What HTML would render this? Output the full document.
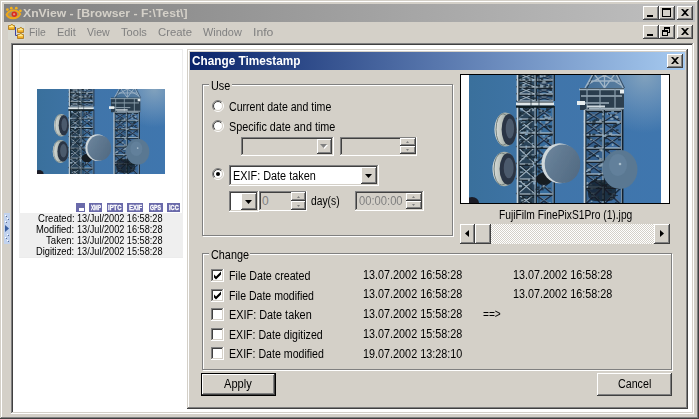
<!DOCTYPE html><html><head><meta charset="utf-8"><title>XnView - Change Timestamp</title><style>
*{box-sizing:border-box;margin:0;padding:0}
html,body{width:699px;height:419px;overflow:hidden;background:#d4d0c8}
body{position:relative;font-family:"Liberation Sans",sans-serif;font-size:11px;color:#000;line-height:13px}
.a{position:absolute}
.t{position:absolute;white-space:nowrap}
.win{box-shadow:inset -1px -1px #404040,inset 1px 1px #d4d0c8,inset -2px -2px #808080,inset 2px 2px #fff;background:#d4d0c8}
.btn{box-shadow:inset -1px -1px #404040,inset 1px 1px #fff,inset -2px -2px #808080,inset 2px 2px #d4d0c8;background:#d4d0c8}
.sunk{box-shadow:inset -1px -1px #fff,inset 1px 1px #808080,inset -2px -2px #d4d0c8,inset 2px 2px #404040;background:#fff}
.grp{border:1px solid #808080;box-shadow:1px 1px 0 #fff,inset 1px 1px 0 #fff}
.rad{border-radius:50%;background:#fff;box-shadow:inset 1px 1px 0 #808080,inset -1px -1px 0 #fff,inset 2px 2px 0 #404040,inset -2px -2px 0 #d4d0c8}
.chk{background:repeating-conic-gradient(#fff 0 25%,#d4d0c8 0 50%) 0 0/2px 2px}
svg{position:absolute;overflow:visible}
</style></head><body>
<svg width="0" height="0" style="left:0;top:0"><defs><linearGradient id="fg" x1="0" y1="0" x2="0" y2="1"><stop offset="0" stop-color="#fde98a"/><stop offset=".5" stop-color="#f9c93c"/><stop offset="1" stop-color="#ee9a14"/></linearGradient><linearGradient id="ro" x1="0" y1="0" x2="1" y2="1"><stop offset=".5" stop-color="#808080"/><stop offset=".5" stop-color="#fff"/></linearGradient><linearGradient id="ri" x1="0" y1="0" x2="1" y2="1"><stop offset=".5" stop-color="#404040"/><stop offset=".5" stop-color="#d4d0c8"/></linearGradient></defs><symbol id="ph" viewBox="0 0 192 128" preserveAspectRatio="none"><defs><linearGradient id="sky" x1="0" y1="0" x2="1" y2="0"><stop offset="0" stop-color="#3a709c"/><stop offset=".45" stop-color="#4075aa"/><stop offset="1" stop-color="#3f76ae"/></linearGradient><radialGradient id="hz" cx="176" cy="0" r="58" gradientUnits="userSpaceOnUse"><stop offset="0" stop-color="#8eaac0" stop-opacity=".85"/><stop offset=".5" stop-color="#88a6c2" stop-opacity=".45"/><stop offset="1" stop-color="#88a6c2" stop-opacity="0"/></radialGradient><linearGradient id="dish" x1="0" y1="0" x2="1" y2=".6"><stop offset="0" stop-color="#6f879e"/><stop offset=".5" stop-color="#5f7890"/><stop offset="1" stop-color="#546c84"/></linearGradient><linearGradient id="rim" x1="0" y1="0" x2="1" y2="0"><stop offset="0" stop-color="#dde1de"/><stop offset=".45" stop-color="#adb6b0"/><stop offset="1" stop-color="#7f8b89"/></linearGradient><filter id="bl" x="-5%" y="-5%" width="110%" height="110%"><feGaussianBlur stdDeviation=".5"/></filter></defs><rect width="192" height="128" fill="url(#sky)"/><rect width="192" height="128" fill="url(#hz)"/><g filter="url(#bl)"><ellipse cx="3" cy="128" rx="7" ry="6" fill="#1a1c28"/><rect x="48.5" y="-2" width="17.5" height="28" fill="#22323e" opacity="0.7"/><rect x="66" y="-2" width="18" height="28" fill="#22323e" opacity="0.35"/><path d="M49.8 -2L67.3 5M64.7 -2L47.2 5M49.8 5L67.3 12M64.7 5L47.2 12M49.8 12L67.3 19M64.7 12L47.2 19M49.8 19L67.3 26M64.7 19L47.2 26" stroke="#16242e" stroke-width="1.6" fill="none"/><path d="M48.5 -2L66 5M66 -2L48.5 5M48.5 5L66 12M66 5L48.5 12M48.5 12L66 19M66 12L48.5 19M48.5 19L66 26M66 19L48.5 26" stroke="#98acbc" stroke-width="1.1" fill="none"/><path d="M66 -2L84 5M84 -2L66 5M66 5L84 12M84 5L66 12M66 12L84 19M84 12L66 19M66 19L84 26M84 19L66 26" stroke="#1a2e48" stroke-width="2" fill="none"/><path d="M67.2 -2L85.2 5M82.8 -2L64.8 5M67.2 5L85.2 12M82.8 5L64.8 12M67.2 12L85.2 19M82.8 12L64.8 19M67.2 19L85.2 26M82.8 19L64.8 26" stroke="#98acbc" stroke-width=".7" fill="none" opacity=".75"/><path d="M48.5 -0.8H84M48.5 6.2H84M48.5 13.2H84M48.5 20.2H84M48.5 27.2H84" stroke="#16242e" stroke-width="1.8" fill="none"/><path d="M48.5 -2H84M48.5 5H84M48.5 12H84M48.5 19H84M48.5 26H84" stroke="#c6d2da" stroke-width="1" fill="none"/><path d="M49.7 -2V26" stroke="#16242e" stroke-width="1.500"/><path d="M48.5 -2V26" stroke="#c6d2da" stroke-width="1.7"/><path d="M67.2 -2V26" stroke="#16242e" stroke-width="1.500"/><path d="M66 -2V26" stroke="#93a5b3" stroke-width="1.2"/><path d="M85.2 -2V26" stroke="#16242e" stroke-width="1.500"/><path d="M84 -2V26" stroke="#7f93a4" stroke-width="0.9"/><rect x="59.7" y="1.9" width="1.6" height="2.2" fill="#98acbc" opacity=".8"/><rect x="52.5" y="13.2" width="1.9" height="1.1" fill="#8fb0cc" opacity=".8"/><rect x="62.7" y="4.3" width="2.3" height="2.2" fill="#8fb0cc" opacity=".8"/><rect x="53.4" y="3.8" width="2.7" height="1.1" fill="#98acbc" opacity=".8"/><rect x="67.9" y="-0.7" width="1.6" height="2.3" fill="#16242e" opacity=".8"/><rect x="58.6" y="1.8" width="2.6" height="1.8" fill="#16242e" opacity=".8"/><rect x="71.0" y="0.7" width="2.8" height="1.6" fill="#8fb0cc" opacity=".8"/><rect x="66.8" y="-0.4" width="2.7" height="1.7" fill="#16242e" opacity=".8"/><rect x="66.2" y="18.2" width="2.7" height="1.7" fill="#2b4254" opacity=".8"/><rect x="58.9" y="18.7" width="3.1" height="1.1" fill="#98acbc" opacity=".8"/><rect x="59.0" y="10.9" width="3.0" height="1.4" fill="#16242e" opacity=".8"/><rect x="80.4" y="1.1" width="1.8" height="1.5" fill="#2b4254" opacity=".8"/><rect x="78.9" y="9.0" width="1.7" height="1.8" fill="#98acbc" opacity=".8"/><rect x="74.4" y="19.3" width="2.9" height="1.9" fill="#16242e" opacity=".8"/><rect x="67.8" y="9.9" width="3.4" height="1.7" fill="#16242e" opacity=".8"/><rect x="70.4" y="-0.4" width="2.1" height="1.9" fill="#98acbc" opacity=".8"/><rect x="71.0" y="9.6" width="2.3" height="2.0" fill="#98acbc" opacity=".8"/><rect x="50.2" y="10.0" width="2.7" height="1.7" fill="#16242e" opacity=".8"/><rect x="56.4" y="5.5" width="2.0" height="1.6" fill="#98acbc" opacity=".8"/><rect x="76.9" y="0.1" width="2.3" height="1.4" fill="#2b4254" opacity=".8"/><rect x="53.8" y="9.2" width="2.1" height="1.6" fill="#8fb0cc" opacity=".8"/><rect x="60.8" y="21.0" width="1.8" height="1.3" fill="#16242e" opacity=".8"/><rect x="56.8" y="4.1" width="3.2" height="1.3" fill="#2b4254" opacity=".8"/><rect x="58.4" y="1.8" width="2.2" height="1.8" fill="#8fb0cc" opacity=".8"/><rect x="79.5" y="16.0" width="3.4" height="2.0" fill="#8fb0cc" opacity=".8"/><rect x="72.8" y="9.9" width="3.1" height="1.6" fill="#98acbc" opacity=".8"/><rect x="62.1" y="0.7" width="2.3" height="1.3" fill="#98acbc" opacity=".8"/><rect x="80.5" y="9.5" width="2.2" height="1.1" fill="#16242e" opacity=".8"/><rect x="49.5" y="1.9" width="3.4" height="1.9" fill="#16242e" opacity=".8"/><rect x="51.7" y="3.4" width="1.8" height="1.4" fill="#2b4254" opacity=".8"/><rect x="60.4" y="7.5" width="1.7" height="1.7" fill="#16242e" opacity=".8"/><rect x="80.3" y="10.5" width="1.7" height="1.2" fill="#16242e" opacity=".8"/><rect x="60.3" y="4.9" width="1.8" height="1.0" fill="#98acbc" opacity=".8"/><rect x="79.5" y="11.7" width="2.9" height="2.4" fill="#16242e" opacity=".8"/><rect x="73.4" y="5.8" width="3.2" height="2.0" fill="#98acbc" opacity=".8"/><rect x="57.7" y="7.5" width="2.2" height="1.3" fill="#16242e" opacity=".8"/><rect x="66.6" y="11.1" width="1.9" height="2.2" fill="#98acbc" opacity=".8"/><rect x="80.5" y="20.2" width="3.1" height="2.1" fill="#16242e" opacity=".8"/><rect x="56.6" y="11.5" width="3.0" height="2.5" fill="#16242e" opacity=".8"/><rect x="74.4" y="10.3" width="2.9" height="2.4" fill="#16242e" opacity=".8"/><rect x="63.6" y="22.4" width="3.4" height="1.5" fill="#16242e" opacity=".8"/><rect x="56.4" y="3.9" width="2.2" height="1.7" fill="#16242e" opacity=".8"/><rect x="80.5" y="13.9" width="2.5" height="2.0" fill="#16242e" opacity=".8"/><rect x="74.7" y="0.2" width="1.7" height="1.6" fill="#98acbc" opacity=".8"/><rect x="71.9" y="3.2" width="2.4" height="2.0" fill="#16242e" opacity=".8"/><rect x="48.5" y="31" width="17.5" height="101" fill="#22323e" opacity="0.75"/><rect x="66" y="31" width="18" height="101" fill="#22323e" opacity="0.12"/><path d="M49.8 31L67.3 44M64.7 31L47.2 44M49.8 44L67.3 58M64.7 44L47.2 58M49.8 58L67.3 72M64.7 58L47.2 72M49.8 72L67.3 89M64.7 72L47.2 89M49.8 89L67.3 104M64.7 89L47.2 104M49.8 104L67.3 119M64.7 104L47.2 119M49.8 119L67.3 132M64.7 119L47.2 132" stroke="#16242e" stroke-width="1.6" fill="none"/><path d="M48.5 31L66 44M66 31L48.5 44M48.5 44L66 58M66 44L48.5 58M48.5 58L66 72M66 58L48.5 72M48.5 72L66 89M66 72L48.5 89M48.5 89L66 104M66 89L48.5 104M48.5 104L66 119M66 104L48.5 119M48.5 119L66 132M66 119L48.5 132" stroke="#98acbc" stroke-width="1.1" fill="none"/><path d="M66 31L84 44M84 31L66 44M66 44L84 58M84 44L66 58M66 58L84 72M84 58L66 72M66 72L84 89M84 72L66 89M66 89L84 104M84 89L66 104M66 104L84 119M84 104L66 119M66 119L84 132M84 119L66 132" stroke="#1a2e48" stroke-width="2" fill="none"/><path d="M67.2 31L85.2 44M82.8 31L64.8 44M67.2 44L85.2 58M82.8 44L64.8 58M67.2 58L85.2 72M82.8 58L64.8 72M67.2 72L85.2 89M82.8 72L64.8 89M67.2 89L85.2 104M82.8 89L64.8 104M67.2 104L85.2 119M82.8 104L64.8 119M67.2 119L85.2 132M82.8 119L64.8 132" stroke="#98acbc" stroke-width=".7" fill="none" opacity=".75"/><path d="M48.5 32.2H84M48.5 45.2H84M48.5 59.2H84M48.5 73.2H84M48.5 90.2H84M48.5 105.2H84M48.5 120.2H84M48.5 133.2H84" stroke="#16242e" stroke-width="1.8" fill="none"/><path d="M48.5 31H84M48.5 44H84M48.5 58H84M48.5 72H84M48.5 89H84M48.5 104H84M48.5 119H84M48.5 132H84" stroke="#c6d2da" stroke-width="1" fill="none"/><path d="M49.7 31V132" stroke="#16242e" stroke-width="1.500"/><path d="M48.5 31V132" stroke="#c6d2da" stroke-width="1.7"/><path d="M67.2 31V132" stroke="#16242e" stroke-width="1.500"/><path d="M66 31V132" stroke="#93a5b3" stroke-width="1.2"/><path d="M85.2 31V132" stroke="#16242e" stroke-width="1.500"/><path d="M84 31V132" stroke="#7f93a4" stroke-width="0.9"/><rect x="52.2" y="124.7" width="2.3" height="1.6" fill="#98acbc" opacity=".8"/><rect x="79.3" y="102.8" width="3.5" height="1.0" fill="#16242e" opacity=".8"/><rect x="68.1" y="77.1" width="1.8" height="2.2" fill="#98acbc" opacity=".8"/><rect x="80.4" y="96.1" width="1.8" height="1.8" fill="#16242e" opacity=".8"/><rect x="50.2" y="110.1" width="2.8" height="1.8" fill="#98acbc" opacity=".8"/><rect x="78.9" y="73.9" width="3.2" height="1.3" fill="#16242e" opacity=".8"/><rect x="57.4" y="60.0" width="3.0" height="1.5" fill="#16242e" opacity=".8"/><rect x="66.6" y="113.6" width="3.3" height="1.5" fill="#16242e" opacity=".8"/><rect x="63.9" y="88.8" width="2.3" height="2.4" fill="#8fb0cc" opacity=".8"/><rect x="65.3" y="83.7" width="2.5" height="2.3" fill="#8fb0cc" opacity=".8"/><rect x="74.0" y="91.2" width="1.8" height="1.7" fill="#16242e" opacity=".8"/><rect x="72.3" y="86.1" width="2.9" height="1.8" fill="#16242e" opacity=".8"/><rect x="64.7" y="107.9" width="1.6" height="1.3" fill="#8fb0cc" opacity=".8"/><rect x="50.8" y="40.7" width="2.6" height="2.1" fill="#2b4254" opacity=".8"/><rect x="78.2" y="74.9" width="3.4" height="1.9" fill="#8fb0cc" opacity=".8"/><rect x="55.8" y="58.4" width="2.6" height="1.7" fill="#8fb0cc" opacity=".8"/><rect x="79.2" y="100.2" width="3.3" height="2.3" fill="#16242e" opacity=".8"/><rect x="55.9" y="75.3" width="1.7" height="1.7" fill="#2b4254" opacity=".8"/><rect x="51.8" y="54.8" width="1.9" height="1.5" fill="#16242e" opacity=".8"/><rect x="53.4" y="107.9" width="2.8" height="1.5" fill="#98acbc" opacity=".8"/><rect x="57.5" y="44.6" width="1.9" height="2.4" fill="#2b4254" opacity=".8"/><rect x="62.0" y="79.2" width="3.2" height="1.2" fill="#98acbc" opacity=".8"/><rect x="63.1" y="82.0" width="2.3" height="1.5" fill="#16242e" opacity=".8"/><rect x="52.4" y="67.2" width="2.6" height="1.7" fill="#16242e" opacity=".8"/><rect x="50.1" y="63.8" width="2.1" height="2.4" fill="#8fb0cc" opacity=".8"/><rect x="53.1" y="121.9" width="3.4" height="1.2" fill="#16242e" opacity=".8"/><rect x="57.9" y="34.9" width="2.0" height="1.2" fill="#16242e" opacity=".8"/><rect x="62.8" y="121.2" width="2.3" height="1.8" fill="#16242e" opacity=".8"/><rect x="65.7" y="80.0" width="1.7" height="1.1" fill="#16242e" opacity=".8"/><rect x="71.2" y="73.1" width="2.0" height="1.0" fill="#16242e" opacity=".8"/><rect x="52.3" y="56.8" width="3.2" height="1.1" fill="#8fb0cc" opacity=".8"/><rect x="76.7" y="75.9" width="3.5" height="1.6" fill="#16242e" opacity=".8"/><rect x="78.3" y="92.5" width="2.6" height="1.4" fill="#16242e" opacity=".8"/><rect x="52.9" y="47.0" width="1.9" height="2.4" fill="#16242e" opacity=".8"/><rect x="69.3" y="83.6" width="2.1" height="1.8" fill="#16242e" opacity=".8"/><rect x="55.1" y="65.4" width="3.5" height="1.1" fill="#16242e" opacity=".8"/><rect x="50.1" y="81.1" width="2.5" height="1.4" fill="#16242e" opacity=".8"/><rect x="63.6" y="96.2" width="2.4" height="1.7" fill="#98acbc" opacity=".8"/><rect x="75.8" y="69.9" width="2.1" height="1.3" fill="#8fb0cc" opacity=".8"/><rect x="56.7" y="50.7" width="3.0" height="1.2" fill="#98acbc" opacity=".8"/><rect x="80.7" y="128.2" width="1.5" height="1.9" fill="#16242e" opacity=".8"/><rect x="77.2" y="73.6" width="1.7" height="2.3" fill="#16242e" opacity=".8"/><rect x="76.9" y="97.4" width="2.7" height="2.0" fill="#16242e" opacity=".8"/><rect x="50.9" y="49.3" width="2.4" height="1.4" fill="#16242e" opacity=".8"/><rect x="79.8" y="127.3" width="2.1" height="1.1" fill="#8fb0cc" opacity=".8"/><rect x="77.3" y="52.6" width="1.5" height="1.6" fill="#16242e" opacity=".8"/><rect x="64.5" y="80.8" width="2.0" height="2.2" fill="#16242e" opacity=".8"/><rect x="52.4" y="111.9" width="2.3" height="1.1" fill="#16242e" opacity=".8"/><rect x="50.2" y="61.1" width="1.7" height="2.4" fill="#16242e" opacity=".8"/><rect x="76.4" y="46.4" width="3.1" height="1.9" fill="#98acbc" opacity=".8"/><rect x="73.6" y="102.3" width="1.8" height="2.1" fill="#2b4254" opacity=".8"/><rect x="69.8" y="35.3" width="3.3" height="1.9" fill="#98acbc" opacity=".8"/><rect x="72.6" y="111.4" width="3.3" height="2.1" fill="#16242e" opacity=".8"/><rect x="67.4" y="111.5" width="3.2" height="1.9" fill="#16242e" opacity=".8"/><rect x="77.6" y="98.6" width="2.8" height="1.1" fill="#98acbc" opacity=".8"/><rect x="50.8" y="94.1" width="2.3" height="1.7" fill="#16242e" opacity=".8"/><rect x="51.1" y="32.9" width="2.9" height="1.7" fill="#8fb0cc" opacity=".8"/><rect x="49.6" y="110.0" width="3.4" height="2.3" fill="#98acbc" opacity=".8"/><rect x="52.4" y="83.1" width="3.0" height="1.4" fill="#98acbc" opacity=".8"/><rect x="51.8" y="57.3" width="3.0" height="1.3" fill="#98acbc" opacity=".8"/><rect x="70.0" y="76.6" width="1.7" height="2.4" fill="#2b4254" opacity=".8"/><rect x="58.6" y="35.6" width="2.8" height="1.1" fill="#98acbc" opacity=".8"/><rect x="54.1" y="56.1" width="2.9" height="1.9" fill="#98acbc" opacity=".8"/><rect x="53.7" y="78.8" width="2.0" height="2.0" fill="#2b4254" opacity=".8"/><rect x="71.3" y="97.9" width="2.9" height="1.4" fill="#16242e" opacity=".8"/><rect x="64.2" y="106.9" width="1.9" height="2.5" fill="#8fb0cc" opacity=".8"/><rect x="79.0" y="32.7" width="1.7" height="1.8" fill="#2b4254" opacity=".8"/><rect x="80.8" y="129.4" width="1.9" height="2.4" fill="#2b4254" opacity=".8"/><rect x="56.1" y="88.6" width="3.0" height="1.4" fill="#16242e" opacity=".8"/><rect x="60.8" y="90.7" width="2.5" height="2.3" fill="#98acbc" opacity=".8"/><rect x="71.7" y="53.9" width="2.3" height="1.2" fill="#2b4254" opacity=".8"/><rect x="79.4" y="98.5" width="2.1" height="1.2" fill="#2b4254" opacity=".8"/><rect x="60.3" y="62.3" width="1.5" height="2.1" fill="#16242e" opacity=".8"/><rect x="75.9" y="42.9" width="2.9" height="2.4" fill="#16242e" opacity=".8"/><rect x="58.6" y="67.8" width="2.3" height="2.3" fill="#2b4254" opacity=".8"/><rect x="51.9" y="122.6" width="3.2" height="1.4" fill="#16242e" opacity=".8"/><rect x="51.1" y="96.5" width="3.4" height="1.4" fill="#98acbc" opacity=".8"/><rect x="57.9" y="81.6" width="3.0" height="2.2" fill="#16242e" opacity=".8"/><rect x="63.0" y="33.9" width="2.3" height="2.3" fill="#98acbc" opacity=".8"/><rect x="67.0" y="51.1" width="1.6" height="2.1" fill="#16242e" opacity=".8"/><rect x="63.7" y="105.5" width="3.2" height="1.7" fill="#98acbc" opacity=".8"/><rect x="78.2" y="85.5" width="2.4" height="1.5" fill="#16242e" opacity=".8"/><rect x="58.9" y="104.2" width="2.0" height="2.0" fill="#98acbc" opacity=".8"/><rect x="59.0" y="86.2" width="1.7" height="2.0" fill="#2b4254" opacity=".8"/><rect x="51.9" y="80.6" width="2.6" height="1.7" fill="#2b4254" opacity=".8"/><rect x="60.0" y="106.2" width="1.8" height="1.3" fill="#2b4254" opacity=".8"/><rect x="52.4" y="64.9" width="2.1" height="1.6" fill="#16242e" opacity=".8"/><rect x="75.0" y="51.0" width="3.0" height="1.6" fill="#16242e" opacity=".8"/><rect x="62.5" y="82.9" width="2.0" height="2.1" fill="#2b4254" opacity=".8"/><rect x="65.2" y="87.9" width="1.8" height="1.8" fill="#16242e" opacity=".8"/><rect x="69.3" y="116.4" width="1.7" height="2.3" fill="#16242e" opacity=".8"/><rect x="61.6" y="94.9" width="3.4" height="2.3" fill="#2b4254" opacity=".8"/><rect x="77.0" y="33.2" width="2.4" height="2.1" fill="#16242e" opacity=".8"/><rect x="74.8" y="126.9" width="1.5" height="1.6" fill="#2b4254" opacity=".8"/><rect x="78.7" y="112.7" width="3.4" height="1.4" fill="#2b4254" opacity=".8"/><rect x="52.9" y="46.3" width="3.4" height="1.2" fill="#8fb0cc" opacity=".8"/><rect x="75.5" y="100.4" width="1.7" height="2.2" fill="#2b4254" opacity=".8"/><rect x="49.5" y="43.4" width="3.3" height="2.0" fill="#8fb0cc" opacity=".8"/><rect x="59.1" y="43.7" width="2.6" height="1.7" fill="#16242e" opacity=".8"/><rect x="73.6" y="40.8" width="2.5" height="1.9" fill="#16242e" opacity=".8"/><rect x="61.7" y="53.1" width="1.5" height="1.8" fill="#8fb0cc" opacity=".8"/><rect x="80.9" y="58.6" width="2.8" height="2.3" fill="#16242e" opacity=".8"/><rect x="64.5" y="54.2" width="1.6" height="1.6" fill="#16242e" opacity=".8"/><rect x="70.0" y="36.5" width="2.5" height="2.0" fill="#16242e" opacity=".8"/><rect x="62.7" y="56.5" width="2.3" height="1.6" fill="#98acbc" opacity=".8"/><rect x="65.0" y="99.9" width="2.3" height="2.0" fill="#98acbc" opacity=".8"/><rect x="55.7" y="109.9" width="3.2" height="1.1" fill="#98acbc" opacity=".8"/><rect x="65.1" y="50.8" width="2.0" height="1.3" fill="#16242e" opacity=".8"/><rect x="73.5" y="60.2" width="2.5" height="1.3" fill="#8fb0cc" opacity=".8"/><rect x="56.5" y="72.3" width="1.6" height="1.9" fill="#98acbc" opacity=".8"/><rect x="78.5" y="36.4" width="3.4" height="1.2" fill="#16242e" opacity=".8"/><rect x="51.1" y="37.0" width="2.4" height="2.1" fill="#2b4254" opacity=".8"/><rect x="59.4" y="42.2" width="3.4" height="1.5" fill="#16242e" opacity=".8"/><rect x="55.3" y="123.7" width="2.4" height="1.5" fill="#98acbc" opacity=".8"/><rect x="72.3" y="114.1" width="2.4" height="1.2" fill="#16242e" opacity=".8"/><rect x="52.0" y="39.0" width="3.4" height="1.2" fill="#2b4254" opacity=".8"/><rect x="79.9" y="51.5" width="3.0" height="1.5" fill="#16242e" opacity=".8"/><rect x="74.8" y="39.7" width="2.4" height="1.6" fill="#98acbc" opacity=".8"/><rect x="78.5" y="50.1" width="3.0" height="1.7" fill="#16242e" opacity=".8"/><rect x="69.4" y="55.6" width="3.0" height="1.1" fill="#98acbc" opacity=".8"/><rect x="50.6" y="37.2" width="2.0" height="2.1" fill="#16242e" opacity=".8"/><rect x="77.8" y="64.6" width="2.2" height="2.4" fill="#16242e" opacity=".8"/><rect x="50.9" y="104.9" width="2.1" height="1.4" fill="#98acbc" opacity=".8"/><rect x="49.6" y="105.8" width="3.4" height="1.1" fill="#98acbc" opacity=".8"/><rect x="75.5" y="41.6" width="3.4" height="2.4" fill="#98acbc" opacity=".8"/><rect x="61.7" y="55.9" width="3.1" height="1.2" fill="#2b4254" opacity=".8"/><rect x="65.1" y="31.9" width="2.1" height="2.0" fill="#98acbc" opacity=".8"/><rect x="54.3" y="54.4" width="2.4" height="2.2" fill="#16242e" opacity=".8"/><rect x="68.3" y="81.7" width="3.0" height="1.4" fill="#2b4254" opacity=".8"/><rect x="51.5" y="34.4" width="2.6" height="1.2" fill="#8fb0cc" opacity=".8"/><rect x="62.9" y="41.4" width="2.0" height="1.1" fill="#16242e" opacity=".8"/><rect x="52.5" y="80.3" width="3.4" height="1.3" fill="#98acbc" opacity=".8"/><rect x="53.7" y="76.6" width="2.0" height="1.8" fill="#98acbc" opacity=".8"/><rect x="73.9" y="106.2" width="2.1" height="1.9" fill="#16242e" opacity=".8"/><rect x="61.2" y="104.1" width="2.4" height="1.3" fill="#16242e" opacity=".8"/><rect x="56.9" y="58.9" width="1.9" height="1.1" fill="#8fb0cc" opacity=".8"/><rect x="57.4" y="55.3" width="2.0" height="2.2" fill="#8fb0cc" opacity=".8"/><rect x="70.1" y="129.1" width="1.5" height="2.3" fill="#16242e" opacity=".8"/><rect x="56.8" y="75.4" width="1.6" height="1.4" fill="#16242e" opacity=".8"/><rect x="53.3" y="49.8" width="1.9" height="1.1" fill="#8fb0cc" opacity=".8"/><rect x="65.6" y="48.6" width="2.0" height="2.2" fill="#8fb0cc" opacity=".8"/><rect x="79.3" y="41.5" width="2.9" height="1.5" fill="#8fb0cc" opacity=".8"/><rect x="50.7" y="64.7" width="1.9" height="1.4" fill="#16242e" opacity=".8"/><rect x="68.4" y="95.5" width="3.1" height="2.2" fill="#16242e" opacity=".8"/><rect x="62.4" y="67.8" width="2.1" height="1.3" fill="#8fb0cc" opacity=".8"/><rect x="74.6" y="85.3" width="2.3" height="2.2" fill="#16242e" opacity=".8"/><rect x="70.4" y="46.3" width="1.7" height="1.2" fill="#8fb0cc" opacity=".8"/><rect x="71.4" y="71.6" width="2.8" height="1.6" fill="#16242e" opacity=".8"/><rect x="51.1" y="104.8" width="2.3" height="1.0" fill="#16242e" opacity=".8"/><rect x="73.6" y="110.4" width="1.9" height="2.1" fill="#98acbc" opacity=".8"/><rect x="55.9" y="31.6" width="2.3" height="2.2" fill="#16242e" opacity=".8"/><rect x="62.3" y="118.4" width="3.0" height="1.2" fill="#2b4254" opacity=".8"/><rect x="51.1" y="45.1" width="1.7" height="1.9" fill="#2b4254" opacity=".8"/><rect x="61.2" y="80.9" width="2.2" height="1.2" fill="#16242e" opacity=".8"/><rect x="54.9" y="37.6" width="2.5" height="2.2" fill="#2b4254" opacity=".8"/><rect x="80.0" y="50.5" width="3.2" height="1.1" fill="#16242e" opacity=".8"/><rect x="78.3" y="62.1" width="3.4" height="1.6" fill="#8fb0cc" opacity=".8"/><rect x="78.0" y="92.4" width="2.8" height="2.3" fill="#16242e" opacity=".8"/><rect x="69.1" y="91.9" width="3.2" height="1.3" fill="#16242e" opacity=".8"/><rect x="56.4" y="70.6" width="1.8" height="1.5" fill="#8fb0cc" opacity=".8"/><rect x="54.2" y="127.1" width="1.6" height="1.8" fill="#16242e" opacity=".8"/><rect x="73.4" y="34.8" width="1.7" height="1.9" fill="#16242e" opacity=".8"/><rect x="47" y="27.5" width="38" height="3" fill="#dfe7ea"/><rect x="47" y="30.5" width="38" height="2.2" fill="#101c22"/><path d="M62 -2V130M70 -2V130" stroke="#1a2a36" stroke-width="1" opacity=".7"/><path d="M124.500 -2L116 13H154L146.500 -2z" fill="#4a6880" opacity=".45"/><path d="M124.500 -2L116 13M146.500 -2L154 13M135.500 -2V13M124.500 -2L135.500 13L146.500 -2M120 6H150M118 10L135.500 0L152 10" stroke="#9fb4c6" stroke-width="1.300" fill="none"/><path d="M126 -2L118 13M148 -2L155.500 13" stroke="#1c2c38" stroke-width="1" fill="none" opacity=".7"/><rect x="111" y="13" width="44" height="22" fill="#23323c" opacity=".85"/><path d="M110 14.5H155M112 21H153M110 28H140M120 33.5H155" stroke="#9fb0bd" stroke-width="1.3"/><path d="M118 14V34M131 14V34M146 14V34" stroke="#8a9dac" stroke-width="1.2"/><rect x="108" y="26" width="8" height="4" fill="#e8eef0"/><rect x="118" y="30.500" width="18" height="2" fill="#d0dae0"/><rect x="151" y="15" width="4" height="3.500" fill="#e8eef0"/><rect x="115.5" y="35" width="18.5" height="95" fill="#22323e" opacity="0.3"/><rect x="134" y="35" width="18.5" height="95" fill="#22323e" opacity="0.15"/><path d="M115.5 35L134 47M134 35L115.5 47M115.5 47L134 60M134 47L115.5 60M115.5 60L134 73M134 60L115.5 73M115.5 73L134 86M134 73L115.5 86M115.5 86L134 99M134 86L115.5 99M115.5 99L134 112M134 99L115.5 112M115.5 112L134 130M134 112L115.5 130" stroke="#1a2e48" stroke-width="2" fill="none"/><path d="M116.8 35L135.3 47M132.7 35L114.2 47M116.8 47L135.3 60M132.7 47L114.2 60M116.8 60L135.3 73M132.7 60L114.2 73M116.8 73L135.3 86M132.7 73L114.2 86M116.8 86L135.3 99M132.7 86L114.2 99M116.8 99L135.3 112M132.7 99L114.2 112M116.8 112L135.3 130M132.7 112L114.2 130" stroke="#98acbc" stroke-width=".7" fill="none" opacity=".75"/><path d="M134 35L152.5 47M152.5 35L134 47M134 47L152.5 60M152.5 47L134 60M134 60L152.5 73M152.5 60L134 73M134 73L152.5 86M152.5 73L134 86M134 86L152.5 99M152.5 86L134 99M134 99L152.5 112M152.5 99L134 112M134 112L152.5 130M152.5 112L134 130" stroke="#1a2e48" stroke-width="2" fill="none"/><path d="M135.2 35L153.7 47M151.3 35L132.8 47M135.2 47L153.7 60M151.3 47L132.8 60M135.2 60L153.7 73M151.3 60L132.8 73M135.2 73L153.7 86M151.3 73L132.8 86M135.2 86L153.7 99M151.3 86L132.8 99M135.2 99L153.7 112M151.3 99L132.8 112M135.2 112L153.7 130M151.3 112L132.8 130" stroke="#98acbc" stroke-width=".7" fill="none" opacity=".75"/><path d="M115.5 36.2H152.5M115.5 48.2H152.5M115.5 61.2H152.5M115.5 74.2H152.5M115.5 87.2H152.5M115.5 100.2H152.5M115.5 113.2H152.5M115.5 131.2H152.5" stroke="#16242e" stroke-width="1.8" fill="none"/><path d="M115.5 35H152.5M115.5 47H152.5M115.5 60H152.5M115.5 73H152.5M115.5 86H152.5M115.5 99H152.5M115.5 112H152.5M115.5 130H152.5" stroke="#c6d2da" stroke-width="1" fill="none"/><path d="M116.7 35V130" stroke="#16242e" stroke-width="1.500"/><path d="M115.5 35V130" stroke="#c6d2da" stroke-width="1.7"/><path d="M135.2 35V130" stroke="#16242e" stroke-width="1.500"/><path d="M134 35V130" stroke="#93a5b3" stroke-width="1.2"/><path d="M153.7 35V130" stroke="#16242e" stroke-width="1.500"/><path d="M152.5 35V130" stroke="#7f93a4" stroke-width="0.9"/><rect x="134.7" y="93.3" width="2.8" height="1.5" fill="#16242e" opacity=".8"/><rect x="124.7" y="71.2" width="2.4" height="1.7" fill="#16242e" opacity=".8"/><rect x="117.3" y="92.6" width="2.4" height="1.7" fill="#2b4254" opacity=".8"/><rect x="136.9" y="111.2" width="3.1" height="1.6" fill="#16242e" opacity=".8"/><rect x="118.7" y="68.3" width="1.7" height="1.7" fill="#16242e" opacity=".8"/><rect x="133.3" y="38.8" width="1.8" height="2.4" fill="#98acbc" opacity=".8"/><rect x="126.9" y="102.0" width="1.6" height="1.8" fill="#16242e" opacity=".8"/><rect x="129.0" y="123.4" width="1.6" height="1.1" fill="#16242e" opacity=".8"/><rect x="136.8" y="99.4" width="1.9" height="2.5" fill="#16242e" opacity=".8"/><rect x="132.7" y="124.0" width="2.9" height="2.1" fill="#16242e" opacity=".8"/><rect x="123.8" y="112.5" width="3.0" height="1.2" fill="#8fb0cc" opacity=".8"/><rect x="146.1" y="60.6" width="1.8" height="1.8" fill="#2b4254" opacity=".8"/><rect x="146.9" y="54.4" width="2.7" height="1.4" fill="#16242e" opacity=".8"/><rect x="128.8" y="53.5" width="1.8" height="2.4" fill="#2b4254" opacity=".8"/><rect x="138.9" y="118.3" width="3.1" height="1.4" fill="#16242e" opacity=".8"/><rect x="141.9" y="39.5" width="3.4" height="1.7" fill="#16242e" opacity=".8"/><rect x="133.7" y="99.1" width="2.0" height="1.8" fill="#16242e" opacity=".8"/><rect x="144.8" y="103.6" width="2.0" height="2.5" fill="#16242e" opacity=".8"/><rect x="135.6" y="68.5" width="2.4" height="1.3" fill="#16242e" opacity=".8"/><rect x="141.0" y="39.5" width="2.0" height="2.0" fill="#8fb0cc" opacity=".8"/><rect x="149.0" y="89.5" width="3.3" height="2.1" fill="#98acbc" opacity=".8"/><rect x="141.2" y="55.6" width="2.7" height="1.6" fill="#16242e" opacity=".8"/><rect x="133.4" y="118.3" width="2.5" height="1.9" fill="#16242e" opacity=".8"/><rect x="118.0" y="40.1" width="2.2" height="1.2" fill="#8fb0cc" opacity=".8"/><rect x="128.3" y="55.9" width="2.1" height="1.2" fill="#8fb0cc" opacity=".8"/><rect x="128.6" y="112.0" width="1.8" height="2.4" fill="#16242e" opacity=".8"/><rect x="124.5" y="48.9" width="1.6" height="1.2" fill="#16242e" opacity=".8"/><rect x="138.5" y="60.1" width="3.4" height="1.1" fill="#16242e" opacity=".8"/><rect x="143.6" y="118.0" width="2.8" height="1.7" fill="#8fb0cc" opacity=".8"/><rect x="147.4" y="103.2" width="1.8" height="1.0" fill="#16242e" opacity=".8"/><rect x="118.5" y="37.3" width="2.0" height="1.1" fill="#16242e" opacity=".8"/><rect x="142.2" y="36.1" width="2.8" height="1.3" fill="#8fb0cc" opacity=".8"/><rect x="130.1" y="83.2" width="2.5" height="2.0" fill="#98acbc" opacity=".8"/><rect x="143.3" y="51.2" width="1.6" height="1.9" fill="#16242e" opacity=".8"/><rect x="149.3" y="102.4" width="2.9" height="1.0" fill="#2b4254" opacity=".8"/><rect x="144.4" y="104.3" width="1.7" height="2.0" fill="#2b4254" opacity=".8"/><rect x="122.3" y="127.7" width="2.0" height="1.1" fill="#16242e" opacity=".8"/><rect x="127.6" y="104.7" width="3.4" height="1.4" fill="#98acbc" opacity=".8"/><rect x="118.2" y="94.1" width="2.4" height="2.2" fill="#98acbc" opacity=".8"/><rect x="133.8" y="59.7" width="3.4" height="2.3" fill="#98acbc" opacity=".8"/><rect x="119.3" y="82.2" width="2.0" height="1.4" fill="#16242e" opacity=".8"/><rect x="141.0" y="122.9" width="3.3" height="1.3" fill="#98acbc" opacity=".8"/><rect x="129.3" y="90.9" width="3.3" height="1.9" fill="#2b4254" opacity=".8"/><rect x="139.4" y="96.9" width="2.4" height="2.3" fill="#8fb0cc" opacity=".8"/><rect x="139.5" y="114.7" width="3.4" height="1.4" fill="#2b4254" opacity=".8"/><rect x="145.7" y="108.4" width="2.7" height="1.1" fill="#2b4254" opacity=".8"/><rect x="146.6" y="48.4" width="1.7" height="1.9" fill="#16242e" opacity=".8"/><rect x="121.8" y="125.9" width="1.6" height="1.1" fill="#98acbc" opacity=".8"/><rect x="139.4" y="94.0" width="1.6" height="1.1" fill="#98acbc" opacity=".8"/><rect x="144.8" y="105.8" width="3.1" height="2.2" fill="#16242e" opacity=".8"/><rect x="145.9" y="41.1" width="3.4" height="1.2" fill="#98acbc" opacity=".8"/><rect x="123.3" y="45.4" width="3.4" height="2.4" fill="#16242e" opacity=".8"/><rect x="141.4" y="43.1" width="2.8" height="1.7" fill="#98acbc" opacity=".8"/><rect x="120.9" y="108.7" width="1.9" height="1.5" fill="#98acbc" opacity=".8"/><rect x="130.5" y="36.9" width="3.4" height="1.1" fill="#16242e" opacity=".8"/><rect x="141.6" y="119.7" width="2.5" height="2.3" fill="#8fb0cc" opacity=".8"/><rect x="136.9" y="37.9" width="1.6" height="1.8" fill="#2b4254" opacity=".8"/><rect x="119.7" y="78.6" width="2.6" height="1.3" fill="#16242e" opacity=".8"/><rect x="145.0" y="43.5" width="1.8" height="1.0" fill="#16242e" opacity=".8"/><rect x="123.2" y="105.9" width="1.5" height="1.7" fill="#16242e" opacity=".8"/><rect x="132.7" y="109.1" width="3.4" height="1.9" fill="#16242e" opacity=".8"/><rect x="148.1" y="82.9" width="3.4" height="1.4" fill="#8fb0cc" opacity=".8"/><rect x="123.6" y="100.1" width="1.8" height="2.4" fill="#2b4254" opacity=".8"/><rect x="141.8" y="80.6" width="2.6" height="1.2" fill="#98acbc" opacity=".8"/><rect x="127.3" y="43.8" width="3.3" height="2.1" fill="#2b4254" opacity=".8"/><rect x="130.4" y="95.1" width="1.9" height="1.4" fill="#16242e" opacity=".8"/><rect x="146.2" y="81.6" width="3.5" height="1.9" fill="#2b4254" opacity=".8"/><rect x="147.6" y="46.8" width="3.0" height="2.1" fill="#8fb0cc" opacity=".8"/><rect x="137.8" y="67.4" width="2.5" height="2.3" fill="#16242e" opacity=".8"/><rect x="131.4" y="86.5" width="1.8" height="1.7" fill="#16242e" opacity=".8"/><rect x="142.0" y="88.9" width="2.2" height="2.0" fill="#16242e" opacity=".8"/><rect x="139.5" y="82.2" width="2.1" height="2.1" fill="#16242e" opacity=".8"/><rect x="144.3" y="49.4" width="3.4" height="2.1" fill="#16242e" opacity=".8"/><rect x="136.4" y="67.4" width="2.2" height="1.3" fill="#16242e" opacity=".8"/><rect x="148.7" y="102.8" width="1.8" height="2.0" fill="#16242e" opacity=".8"/><rect x="122.9" y="49.0" width="3.1" height="2.1" fill="#16242e" opacity=".8"/><rect x="130.9" y="53.2" width="3.3" height="1.4" fill="#98acbc" opacity=".8"/><rect x="145.7" y="78.1" width="2.3" height="2.2" fill="#16242e" opacity=".8"/><rect x="139.4" y="81.5" width="2.1" height="1.0" fill="#98acbc" opacity=".8"/><rect x="125.0" y="103.7" width="3.0" height="2.4" fill="#16242e" opacity=".8"/><rect x="130.7" y="88.4" width="2.8" height="2.3" fill="#98acbc" opacity=".8"/><rect x="138.5" y="95.7" width="2.9" height="2.3" fill="#98acbc" opacity=".8"/><rect x="138.9" y="94.7" width="2.4" height="1.4" fill="#2b4254" opacity=".8"/><rect x="139.6" y="118.2" width="3.1" height="2.1" fill="#16242e" opacity=".8"/><rect x="137.3" y="58.3" width="2.5" height="1.0" fill="#2b4254" opacity=".8"/><rect x="144.8" y="83.2" width="3.4" height="1.3" fill="#98acbc" opacity=".8"/><rect x="138.1" y="107.4" width="3.2" height="2.4" fill="#2b4254" opacity=".8"/><rect x="120.0" y="58.4" width="1.8" height="2.2" fill="#16242e" opacity=".8"/><rect x="147.5" y="83.3" width="3.2" height="1.7" fill="#16242e" opacity=".8"/><rect x="123.3" y="79.2" width="2.8" height="2.2" fill="#16242e" opacity=".8"/><rect x="133.7" y="73.2" width="1.9" height="2.0" fill="#2b4254" opacity=".8"/><rect x="129.5" y="105.9" width="3.0" height="1.9" fill="#16242e" opacity=".8"/><rect x="137.5" y="58.5" width="2.3" height="1.0" fill="#2b4254" opacity=".8"/><rect x="130.3" y="74.1" width="2.8" height="1.9" fill="#98acbc" opacity=".8"/><rect x="120.1" y="63.2" width="3.4" height="1.8" fill="#2b4254" opacity=".8"/><rect x="123.7" y="109.5" width="2.4" height="1.2" fill="#2b4254" opacity=".8"/><rect x="147.2" y="41.4" width="1.9" height="2.0" fill="#98acbc" opacity=".8"/><rect x="140.3" y="110.8" width="2.2" height="2.0" fill="#16242e" opacity=".8"/><rect x="143.5" y="110.9" width="3.5" height="2.1" fill="#2b4254" opacity=".8"/><rect x="137.9" y="107.5" width="2.2" height="2.3" fill="#2b4254" opacity=".8"/><rect x="125.3" y="70.0" width="3.5" height="2.0" fill="#16242e" opacity=".8"/><rect x="132.4" y="109.9" width="2.2" height="2.0" fill="#16242e" opacity=".8"/><rect x="127.1" y="80.1" width="2.8" height="2.0" fill="#8fb0cc" opacity=".8"/><rect x="128.5" y="121.4" width="1.6" height="2.2" fill="#2b4254" opacity=".8"/><rect x="146.4" y="107.9" width="2.6" height="1.5" fill="#16242e" opacity=".8"/><rect x="135.7" y="96.1" width="3.4" height="2.0" fill="#16242e" opacity=".8"/><rect x="124.8" y="44.4" width="3.2" height="1.3" fill="#16242e" opacity=".8"/><rect x="131.4" y="108.0" width="3.3" height="2.2" fill="#16242e" opacity=".8"/><rect x="122.0" y="117.9" width="3.5" height="1.1" fill="#8fb0cc" opacity=".8"/><rect x="146.3" y="86.0" width="3.2" height="1.3" fill="#98acbc" opacity=".8"/><rect x="139.4" y="84.4" width="3.2" height="2.0" fill="#98acbc" opacity=".8"/><rect x="120.4" y="46.0" width="2.0" height="1.2" fill="#2b4254" opacity=".8"/><rect x="132.8" y="40.4" width="3.3" height="2.1" fill="#2b4254" opacity=".8"/><rect x="124.6" y="50.3" width="3.2" height="1.0" fill="#8fb0cc" opacity=".8"/><rect x="144.2" y="78.5" width="2.5" height="1.4" fill="#8fb0cc" opacity=".8"/><rect x="131.9" y="74.6" width="1.7" height="2.0" fill="#98acbc" opacity=".8"/><rect x="137.5" y="37.7" width="1.6" height="2.1" fill="#8fb0cc" opacity=".8"/><rect x="149.5" y="110.2" width="2.5" height="1.7" fill="#16242e" opacity=".8"/><rect x="146.1" y="38.2" width="2.3" height="1.2" fill="#98acbc" opacity=".8"/><rect x="119.6" y="96.3" width="2.4" height="1.8" fill="#16242e" opacity=".8"/><rect x="141.9" y="54.6" width="2.2" height="1.4" fill="#2b4254" opacity=".8"/><rect x="118.2" y="61.9" width="3.2" height="1.6" fill="#16242e" opacity=".8"/><rect x="133.1" y="60.3" width="2.2" height="1.3" fill="#8fb0cc" opacity=".8"/><rect x="132.7" y="46.0" width="2.1" height="1.4" fill="#16242e" opacity=".8"/><rect x="135.9" y="94.0" width="2.3" height="1.8" fill="#16242e" opacity=".8"/><rect x="129.9" y="88.4" width="2.1" height="1.0" fill="#2b4254" opacity=".8"/><rect x="122.8" y="120.7" width="3.0" height="1.1" fill="#8fb0cc" opacity=".8"/><rect x="133.0" y="85.6" width="2.7" height="1.9" fill="#2b4254" opacity=".8"/><rect x="139.5" y="90.5" width="1.7" height="1.1" fill="#98acbc" opacity=".8"/><rect x="137.4" y="93.2" width="1.7" height="1.3" fill="#16242e" opacity=".8"/><rect x="117.7" y="107.0" width="1.5" height="2.3" fill="#98acbc" opacity=".8"/><rect x="121.1" y="63.8" width="2.0" height="1.5" fill="#98acbc" opacity=".8"/><rect x="130.4" y="64.6" width="2.6" height="1.9" fill="#2b4254" opacity=".8"/><rect x="146.7" y="81.3" width="1.6" height="1.2" fill="#8fb0cc" opacity=".8"/><rect x="143.2" y="88.5" width="2.4" height="1.0" fill="#2b4254" opacity=".8"/><rect x="129.3" y="90.1" width="3.5" height="1.7" fill="#98acbc" opacity=".8"/><rect x="130.1" y="44.5" width="2.4" height="2.3" fill="#98acbc" opacity=".8"/><rect x="137.2" y="74.7" width="2.9" height="1.2" fill="#16242e" opacity=".8"/><rect x="148.4" y="43.2" width="1.8" height="1.0" fill="#16242e" opacity=".8"/><rect x="140.2" y="57.5" width="3.0" height="2.4" fill="#98acbc" opacity=".8"/><rect x="128.6" y="104.5" width="3.2" height="2.1" fill="#98acbc" opacity=".8"/><rect x="119.3" y="93.5" width="2.5" height="2.0" fill="#98acbc" opacity=".8"/><rect x="145.9" y="120.0" width="2.9" height="1.0" fill="#16242e" opacity=".8"/><rect x="117.0" y="95.5" width="1.7" height="1.5" fill="#8fb0cc" opacity=".8"/><rect x="140.6" y="50.4" width="2.7" height="1.5" fill="#2b4254" opacity=".8"/><rect x="147.8" y="102.7" width="2.9" height="1.2" fill="#2b4254" opacity=".8"/><rect x="142.8" y="68.8" width="1.8" height="2.2" fill="#98acbc" opacity=".8"/><rect x="132.2" y="107.4" width="3.4" height="2.2" fill="#2b4254" opacity=".8"/><rect x="135.2" y="62.2" width="2.7" height="2.0" fill="#16242e" opacity=".8"/><rect x="143.0" y="90.8" width="3.0" height="1.0" fill="#8fb0cc" opacity=".8"/><rect x="121.5" y="112.4" width="2.4" height="2.3" fill="#8fb0cc" opacity=".8"/><rect x="128.9" y="98.7" width="3.0" height="1.4" fill="#8fb0cc" opacity=".8"/><rect x="131.4" y="99.0" width="2.0" height="1.6" fill="#16242e" opacity=".8"/><rect x="135.9" y="110.9" width="2.1" height="1.2" fill="#16242e" opacity=".8"/><rect x="145.9" y="127.3" width="2.0" height="2.3" fill="#16242e" opacity=".8"/><rect x="143.1" y="98.7" width="2.2" height="1.1" fill="#2b4254" opacity=".8"/><rect x="134.8" y="109.2" width="3.1" height="2.1" fill="#16242e" opacity=".8"/><rect x="148.9" y="63.8" width="2.9" height="1.7" fill="#16242e" opacity=".8"/><rect x="123.3" y="58.7" width="3.1" height="1.7" fill="#16242e" opacity=".8"/><ellipse cx="36.5" cy="54.5" rx="11" ry="17" fill="url(#rim)"/><ellipse cx="34" cy="54.5" rx="7" ry="15.8" fill="none" stroke="#6f7d7b" stroke-width="1"/><ellipse cx="40.1" cy="54.5" rx="7.5" ry="15.4" fill="#2b3444"/><ellipse cx="40.9" cy="53.5" rx="4.2" ry="10" fill="#4c5a6c"/><ellipse cx="35.3" cy="94" rx="11.8" ry="17.3" fill="url(#rim)"/><ellipse cx="32.8" cy="94" rx="7.8" ry="16.1" fill="none" stroke="#6f7d7b" stroke-width="1"/><ellipse cx="38.9" cy="94" rx="8.3" ry="15.7" fill="#2b3444"/><ellipse cx="39.7" cy="93" rx="5" ry="10.3" fill="#4c5a6c"/><ellipse cx="75" cy="104" rx="8" ry="6" fill="#161e24"/><ellipse cx="90.500" cy="88.300" rx="18" ry="20" fill="#cfd7db"/><ellipse cx="93.5" cy="88.8" rx="17.8" ry="19.3" fill="url(#dish)"/><rect x="119" y="105" width="28" height="21" rx="7" fill="#121a22" opacity=".72"/><ellipse cx="151" cy="94.5" rx="17.5" ry="19.5" fill="#5a7892"/><ellipse cx="149" cy="90" rx="9" ry="11" fill="#6a87a4" opacity=".5"/><circle cx="151" cy="89" r="1.300" fill="#a8bccc"/></g></symbol></svg>
<div class="a win" style="left:0px;top:0px;width:699px;height:419px;"></div>
<div class="a " style="left:4px;top:4px;width:691px;height:18px;background:linear-gradient(90deg,#808080,#c0c0c0)"></div>
<div class="t" style="left:23px;top:7px;line-height:13px;height:13px;font-size:11.5px;color:#d4d0c8;font-weight:bold;transform:scaleX(1.0623);transform-origin:0 0;">XnView - [Browser - F:\Test\]</div>
<svg style="left:5px;top:5px" width="18" height="16" viewBox="0 0 18 16"><g fill="#f6b21a"><circle cx="2.4" cy="4.6" r="1.35"/><circle cx="6.3" cy="3.2" r="1.35"/><circle cx="11.3" cy="3.2" r="1.35"/><circle cx="15.4" cy="5.8" r="1.35"/></g><path d="M1.6 9.6C3 6.4 6 5.3 8.6 5.4c3 .1 5.4 1.8 6.6 3.6-1.6 3-4.4 4.5-7.4 4.3C4.6 13.100 2.400 11.700 1.600 9.600z" fill="#f3b63a" fill-opacity=".35" stroke="#f0a818" stroke-width="1.9"/><circle cx="9.300" cy="9.300" r="2.700" fill="#dc2a1c"/><path d="M8 9.200h2.300M9.100 8v2.400" stroke="#f4c8c0" stroke-width=".6"/></svg>
<div class="a " style="left:8px;top:24px;width:17px;height:16px;background:#d8d8d0"></div>
<svg style="left:14px;top:27px" width="4" height="10" viewBox="0 0 4 10"><path d="M1.500 0V8.500H4" fill="none" stroke="#3a46a8" stroke-width="1"/></svg>
<svg style="left:8px;top:24px" width="7" height="6" viewBox="0 0 7 6"><path d="M.5 1.500h2l.6-1h1.400l.5 1h1.500v4h-6z" fill="url(#fg)" stroke="#a87418" stroke-width=".8"/><path d="M1.300 2.600h4.400" stroke="#fff3b8" stroke-width=".8"/></svg>
<svg style="left:17.3px;top:26.5px" width="7" height="6" viewBox="0 0 7 6"><path d="M.5 1.500h2l.6-1h1.400l.5 1h1.500v4h-6z" fill="url(#fg)" stroke="#a87418" stroke-width=".8"/><path d="M1.300 2.600h4.400" stroke="#fff3b8" stroke-width=".8"/></svg>
<svg style="left:17.3px;top:33.3px" width="7" height="6" viewBox="0 0 7 6"><path d="M.5 1.500h2l.6-1h1.400l.5 1h1.500v4h-6z" fill="url(#fg)" stroke="#a87418" stroke-width=".8"/><path d="M1.300 2.600h4.400" stroke="#fff3b8" stroke-width=".8"/></svg>
<div class="a btn" style="left:643px;top:6px;width:16px;height:14px;"></div>
<div class="a " style="left:647px;top:15px;width:6px;height:2px;background:#000"></div>
<div class="a btn" style="left:659px;top:6px;width:16px;height:14px;"></div>
<div class="a " style="left:662px;top:8px;width:9px;height:9px;border:1px solid #000;border-top-width:2px"></div>
<div class="a btn" style="left:677px;top:6px;width:16px;height:14px;"></div>
<svg style="left:681px;top:9px" width="8" height="7" viewBox="0 0 8 7"><path d="M0 0h2l2 2 2-2h2L5 3.5 8 7H6L4 5 2 7H0l3-3.5z" fill="#000"/></svg>
<div class="a btn" style="left:643px;top:25px;width:16px;height:14px;"></div>
<div class="a " style="left:647px;top:34px;width:6px;height:2px;background:#000"></div>
<div class="a btn" style="left:659px;top:25px;width:16px;height:14px;"></div>
<div class="a " style="left:664px;top:27px;width:6px;height:6px;border:1px solid #000;border-top-width:2px"></div>
<div class="a " style="left:662px;top:30px;width:6px;height:6px;border:1px solid #000;border-top-width:2px;background:#d4d0c8"></div>
<div class="a btn" style="left:677px;top:25px;width:16px;height:14px;"></div>
<svg style="left:681px;top:28px" width="8" height="7" viewBox="0 0 8 7"><path d="M0 0h2l2 2 2-2h2L5 3.5 8 7H6L4 5 2 7H0l3-3.5z" fill="#000"/></svg>
<div class="t" style="left:29.1px;top:26px;line-height:13px;height:13px;font-size:11.5px;color:#808080;transform:scaleX(0.9012);transform-origin:0 0;">File</div>
<div class="t" style="left:56.8px;top:26px;line-height:13px;height:13px;font-size:11.5px;color:#808080;transform:scaleX(0.9481);transform-origin:0 0;">Edit</div>
<div class="t" style="left:86.9px;top:26px;line-height:13px;height:13px;font-size:11.5px;color:#808080;transform:scaleX(0.9183);transform-origin:0 0;">View</div>
<div class="t" style="left:121.2px;top:26px;line-height:13px;height:13px;font-size:11.5px;color:#808080;transform:scaleX(0.9643);transform-origin:0 0;">Tools</div>
<div class="t" style="left:157.9px;top:26px;line-height:13px;height:13px;font-size:11.5px;color:#808080;transform:scaleX(0.9846);transform-origin:0 0;">Create</div>
<div class="t" style="left:203.2px;top:26px;line-height:13px;height:13px;font-size:11.5px;color:#808080;transform:scaleX(0.9485);transform-origin:0 0;">Window</div>
<div class="t" style="left:253.4px;top:26px;line-height:13px;height:13px;font-size:11.5px;color:#808080;transform:scaleX(1.0632);transform-origin:0 0;">Info</div>
<div class="a sunk" style="left:11px;top:43px;width:683px;height:371px;"></div>
<div class="a " style="left:4px;top:213px;width:6px;height:31px;background:#c1d2ee"></div>
<svg style="left:5px;top:225px" width="4" height="7" viewBox="0 0 4 7"><path d="M0 0L4 3.5 0 7z" fill="#3a5fa0"/></svg>
<div class="a " style="left:5px;top:215px;width:1px;height:1px;background:#fff"></div>
<div class="a " style="left:6px;top:216px;width:1px;height:1px;background:#5c6f96"></div>
<div class="a " style="left:7px;top:218px;width:1px;height:1px;background:#fff"></div>
<div class="a " style="left:8px;top:219px;width:1px;height:1px;background:#5c6f96"></div>
<div class="a " style="left:5px;top:221px;width:1px;height:1px;background:#fff"></div>
<div class="a " style="left:6px;top:222px;width:1px;height:1px;background:#5c6f96"></div>
<div class="a " style="left:7px;top:234px;width:1px;height:1px;background:#fff"></div>
<div class="a " style="left:8px;top:235px;width:1px;height:1px;background:#5c6f96"></div>
<div class="a " style="left:5px;top:237px;width:1px;height:1px;background:#fff"></div>
<div class="a " style="left:6px;top:238px;width:1px;height:1px;background:#5c6f96"></div>
<div class="a " style="left:7px;top:240px;width:1px;height:1px;background:#fff"></div>
<div class="a " style="left:8px;top:241px;width:1px;height:1px;background:#5c6f96"></div>
<div class="a " style="left:19px;top:49px;width:164px;height:209px;border:1px solid #ececec"></div>
<svg style="left:37px;top:89px" width="128" height="85"><use href="#ph" width="128" height="85"/></svg>
<div class="a " style="left:19px;top:213px;width:164px;height:44px;background:#efefef"></div>
<div class="a " style="left:76px;top:203px;width:9px;height:9px;background:#6a6aaa"></div>
<div class="a " style="left:89px;top:203px;width:13px;height:9px;background:#6a6aaa"></div>
<div class="t" style="left:90.5px;top:203.3px;line-height:9px;height:9px;font-size:7px;color:#fff;font-weight:bold;transform:scaleX(0.6591);transform-origin:0 0;-webkit-text-stroke:.3px #fff;">XMP</div>
<div class="a " style="left:106.5px;top:203px;width:16.5px;height:9px;background:#6a6aaa"></div>
<div class="t" style="left:108px;top:203.3px;line-height:9px;height:9px;font-size:7px;color:#fff;font-weight:bold;transform:scaleX(0.8462);transform-origin:0 0;-webkit-text-stroke:.3px #fff;">IPTC</div>
<div class="a " style="left:127.3px;top:203px;width:16.2px;height:9px;background:#6a6aaa"></div>
<div class="t" style="left:128.8px;top:203.3px;line-height:9px;height:9px;font-size:7px;color:#fff;font-weight:bold;transform:scaleX(0.8482);transform-origin:0 0;-webkit-text-stroke:.3px #fff;">EXIF</div>
<div class="a " style="left:148.5px;top:203px;width:14px;height:9px;background:#6a6aaa"></div>
<div class="t" style="left:150px;top:203.3px;line-height:9px;height:9px;font-size:7px;color:#fff;font-weight:bold;transform:scaleX(0.7434);transform-origin:0 0;-webkit-text-stroke:.3px #fff;">GPS</div>
<div class="a " style="left:167.3px;top:203px;width:12.7px;height:9px;background:#6a6aaa"></div>
<div class="t" style="left:168.8px;top:203.3px;line-height:9px;height:9px;font-size:7px;color:#fff;font-weight:bold;transform:scaleX(0.8041);transform-origin:0 0;-webkit-text-stroke:.3px #fff;">ICC</div>
<div class="a " style="left:78.5px;top:208px;width:5.5px;height:2.5px;background:#fff"></div>
<div class="t" style="left:37.6px;top:212px;line-height:13px;height:13px;font-size:11.5px;color:#000;transform:scaleX(0.8298);transform-origin:0 0;">Created:</div>
<div class="t" style="left:77.3px;top:212px;line-height:13px;height:13px;font-size:11.5px;color:#000;transform:scaleX(0.7958);transform-origin:0 0;">13/Jul/2002 16:58:28</div>
<div class="t" style="left:36px;top:223px;line-height:13px;height:13px;font-size:11.5px;color:#000;transform:scaleX(0.8185);transform-origin:0 0;">Modified:</div>
<div class="t" style="left:77.3px;top:223px;line-height:13px;height:13px;font-size:11.5px;color:#000;transform:scaleX(0.7958);transform-origin:0 0;">13/Jul/2002 16:58:28</div>
<div class="t" style="left:45.9px;top:234px;line-height:13px;height:13px;font-size:11.5px;color:#000;transform:scaleX(0.8350);transform-origin:0 0;">Taken:</div>
<div class="t" style="left:77.3px;top:234px;line-height:13px;height:13px;font-size:11.5px;color:#000;transform:scaleX(0.7958);transform-origin:0 0;">13/Jul/2002 15:58:28</div>
<div class="t" style="left:36px;top:245px;line-height:13px;height:13px;font-size:11.5px;color:#000;transform:scaleX(0.8074);transform-origin:0 0;">Digitized:</div>
<div class="t" style="left:77.3px;top:245px;line-height:13px;height:13px;font-size:11.5px;color:#000;transform:scaleX(0.7958);transform-origin:0 0;">13/Jul/2002 15:58:28</div>
<div class="a win" style="left:187px;top:49px;width:501px;height:360px;"></div>
<div class="a " style="left:190px;top:52px;width:495px;height:18px;background:linear-gradient(90deg,#0a246a,#a6caf0)"></div>
<div class="t" style="left:191.5px;top:54px;line-height:14px;height:14px;font-size:12px;color:#fff;font-weight:bold;transform:scaleX(0.9820);transform-origin:0 0;">Change Timestamp</div>
<div class="a btn" style="left:667px;top:54px;width:16px;height:14px;"></div>
<svg style="left:671px;top:57px" width="8" height="7" viewBox="0 0 8 7"><path d="M0 0h2l2 2 2-2h2L5 3.5 8 7H6L4 5 2 7H0l3-3.5z" fill="#000"/></svg>
<div class="a grp" style="left:202px;top:84px;width:251px;height:152px;"></div>
<div class="a " style="left:209px;top:79px;width:23px;height:12px;background:#d4d0c8"></div>
<div class="t" style="left:211.4px;top:79px;line-height:14px;height:14px;font-size:12px;color:#000;transform:scaleX(0.9042);transform-origin:0 0;">Use</div>
<svg style="left:212px;top:100px" width="12" height="12"><circle cx="6" cy="6" r="5.5" fill="none" stroke="url(#ro)"/><circle cx="6" cy="6" r="4.500" fill="#fff" stroke="url(#ri)"/></svg>
<svg style="left:212px;top:120px" width="12" height="12"><circle cx="6" cy="6" r="5.5" fill="none" stroke="url(#ro)"/><circle cx="6" cy="6" r="4.500" fill="#fff" stroke="url(#ri)"/></svg>
<svg style="left:212px;top:168px" width="12" height="12"><circle cx="6" cy="6" r="5.5" fill="none" stroke="url(#ro)"/><circle cx="6" cy="6" r="4.500" fill="#fff" stroke="url(#ri)"/></svg>
<div class="a " style="left:216px;top:172px;width:4px;height:4px;background:#000;border-radius:50%"></div>
<div class="t" style="left:229px;top:100px;line-height:14px;height:14px;font-size:12px;color:#000;transform:scaleX(0.8814);transform-origin:0 0;">Current date and time</div>
<div class="t" style="left:229px;top:120px;line-height:14px;height:14px;font-size:12px;color:#000;transform:scaleX(0.9003);transform-origin:0 0;">Specific date and time</div>
<div class="a sunk" style="left:241px;top:137px;width:93px;height:19px;background:#d4d0c8"></div>
<div class="a btn" style="left:317px;top:139px;width:15px;height:15px;"></div>
<svg style="left:321px;top:145px" width="7" height="4"><polygon points="0,0 7,0 3.5,4" fill="#fff"/></svg>
<svg style="left:320px;top:144px" width="7" height="4"><polygon points="0,0 7,0 3.5,4" fill="#808080"/></svg>
<div class="a sunk" style="left:340px;top:137px;width:77px;height:19px;background:#d4d0c8"></div>
<div class="a btn" style="left:400px;top:138px;width:16px;height:8px;"></div>
<div class="a btn" style="left:400px;top:146px;width:16px;height:8px;"></div>
<svg style="left:406px;top:141px" width="3" height="2"><polygon points="0,2 3,2 1.5,0" fill="#808080"/></svg>
<svg style="left:406px;top:149px" width="3" height="2"><polygon points="0,0 3,0 1.5,2" fill="#808080"/></svg>
<div class="a sunk" style="left:229px;top:165px;width:150px;height:21px;"></div>
<div class="a btn" style="left:361px;top:167px;width:16px;height:17px;"></div>
<svg style="left:365px;top:173.5px" width="7" height="4"><polygon points="0,0 7,0 3.5,4" fill="#000"/></svg>
<div class="t" style="left:233px;top:169px;line-height:14px;height:14px;font-size:12px;color:#000;transform:scaleX(0.9060);transform-origin:0 0;">EXIF: Date taken</div>
<div class="a sunk" style="left:229px;top:191px;width:30px;height:21px;"></div>
<div class="a btn" style="left:241px;top:193px;width:16px;height:17px;"></div>
<svg style="left:245px;top:199.5px" width="7" height="4"><polygon points="0,0 7,0 3.5,4" fill="#000"/></svg>
<div class="a sunk" style="left:259px;top:191px;width:48px;height:20px;background:#d4d0c8"></div>
<div class="t" style="left:261.9px;top:194px;line-height:14px;height:14px;font-size:12px;color:#808080;">0</div>
<div class="a btn" style="left:291px;top:192px;width:15px;height:9px;"></div>
<div class="a btn" style="left:291px;top:201px;width:15px;height:9px;"></div>
<svg style="left:296.5px;top:195.5px" width="3" height="2"><polygon points="0,2 3,2 1.5,0" fill="#808080"/></svg>
<svg style="left:296.5px;top:204.5px" width="3" height="2"><polygon points="0,0 3,0 1.5,2" fill="#808080"/></svg>
<div class="t" style="left:310.6px;top:194px;line-height:14px;height:14px;font-size:12px;color:#000;transform:scaleX(0.8577);transform-origin:0 0;">day(s)</div>
<div class="a sunk" style="left:355px;top:191px;width:69px;height:20px;background:#d4d0c8"></div>
<div class="t" style="left:358.7px;top:194px;line-height:14px;height:14px;font-size:12px;color:#808080;transform:scaleX(0.9332);transform-origin:0 0;">00:00:00</div>
<div class="a btn" style="left:406px;top:193px;width:16px;height:8px;"></div>
<div class="a btn" style="left:406px;top:201px;width:16px;height:8px;"></div>
<svg style="left:412px;top:196px" width="3" height="2"><polygon points="0,2 3,2 1.5,0" fill="#808080"/></svg>
<svg style="left:412px;top:204px" width="3" height="2"><polygon points="0,0 3,0 1.5,2" fill="#808080"/></svg>
<div class="a " style="left:460px;top:74px;width:210px;height:130px;background:#fff;border:1px solid #000"></div>
<svg style="left:469px;top:75px" width="192" height="128"><use href="#ph" width="192" height="128"/></svg>
<div class="t" style="left:499.4px;top:208px;line-height:14px;height:14px;font-size:12px;color:#000;transform:scaleX(0.8542);transform-origin:0 0;">FujiFilm FinePixS1Pro (1).jpg</div>
<div class="a chk" style="left:460px;top:224px;width:210px;height:20px;"></div>
<div class="a btn" style="left:460px;top:224px;width:15px;height:20px;"></div>
<div class="a btn" style="left:475px;top:224px;width:16px;height:20px;"></div>
<div class="a btn" style="left:654px;top:224px;width:16px;height:20px;"></div>
<svg style="left:465px;top:230px" width="4" height="7"><polygon points="4,0 4,7 0,3.5" fill="#000"/></svg>
<svg style="left:660px;top:230px" width="4" height="7"><polygon points="0,0 0,7 4,3.5" fill="#000"/></svg>
<div class="a grp" style="left:202px;top:253px;width:470px;height:117px;"></div>
<div class="a " style="left:209px;top:248px;width:41px;height:12px;background:#d4d0c8"></div>
<div class="t" style="left:210.9px;top:248px;line-height:14px;height:14px;font-size:12px;color:#000;transform:scaleX(0.9038);transform-origin:0 0;">Change</div>
<div class="a sunk" style="left:211px;top:269px;width:13px;height:13px;"></div>
<svg style="left:214px;top:272px" width="7" height="7" viewBox="0 0 7 7"><path d="M0 2v3l2 2 5-5v-3l-5 5z" fill="#000" transform="translate(0 .5)"/></svg>
<div class="t" style="left:229.2px;top:269px;line-height:14px;height:14px;font-size:12px;color:#000;transform:scaleX(0.8918);transform-origin:0 0;">File Date created</div>
<div class="a sunk" style="left:211px;top:289px;width:13px;height:13px;"></div>
<svg style="left:214px;top:292px" width="7" height="7" viewBox="0 0 7 7"><path d="M0 2v3l2 2 5-5v-3l-5 5z" fill="#000" transform="translate(0 .5)"/></svg>
<div class="t" style="left:229.2px;top:289px;line-height:14px;height:14px;font-size:12px;color:#000;transform:scaleX(0.8788);transform-origin:0 0;">File Date modified</div>
<div class="a sunk" style="left:211px;top:308px;width:13px;height:13px;"></div>
<div class="t" style="left:229.2px;top:308px;line-height:14px;height:14px;font-size:12px;color:#000;transform:scaleX(0.9049);transform-origin:0 0;">EXIF: Date taken</div>
<div class="a sunk" style="left:211px;top:328px;width:13px;height:13px;"></div>
<div class="t" style="left:229.2px;top:328px;line-height:14px;height:14px;font-size:12px;color:#000;transform:scaleX(0.8834);transform-origin:0 0;">EXIF: Date digitized</div>
<div class="a sunk" style="left:211px;top:347px;width:13px;height:13px;"></div>
<div class="t" style="left:229.2px;top:347px;line-height:14px;height:14px;font-size:12px;color:#000;transform:scaleX(0.8837);transform-origin:0 0;">EXIF: Date modified</div>
<div class="t" style="left:363.4px;top:268px;line-height:14px;height:14px;font-size:12px;color:#000;transform:scaleX(0.9018);transform-origin:0 0;">13.07.2002 16:58:28</div>
<div class="t" style="left:363.4px;top:287px;line-height:14px;height:14px;font-size:12px;color:#000;transform:scaleX(0.9018);transform-origin:0 0;">13.07.2002 16:58:28</div>
<div class="t" style="left:363.4px;top:307px;line-height:14px;height:14px;font-size:12px;color:#000;transform:scaleX(0.9018);transform-origin:0 0;">13.07.2002 15:58:28</div>
<div class="t" style="left:363.4px;top:326.5px;line-height:14px;height:14px;font-size:12px;color:#000;transform:scaleX(0.9018);transform-origin:0 0;">13.07.2002 15:58:28</div>
<div class="t" style="left:363.4px;top:346.5px;line-height:14px;height:14px;font-size:12px;color:#000;transform:scaleX(0.9018);transform-origin:0 0;">19.07.2002 13:28:10</div>
<div class="t" style="left:513.4px;top:268px;line-height:14px;height:14px;font-size:12px;color:#000;transform:scaleX(0.9018);transform-origin:0 0;">13.07.2002 16:58:28</div>
<div class="t" style="left:513.4px;top:287px;line-height:14px;height:14px;font-size:12px;color:#000;transform:scaleX(0.9018);transform-origin:0 0;">13.07.2002 16:58:28</div>
<div class="t" style="left:483px;top:307px;line-height:14px;height:14px;font-size:12px;color:#000;transform:scaleX(0.8464);transform-origin:0 0;">==&gt;</div>
<div class="a btn" style="left:201px;top:373px;width:75px;height:23px;border:1px solid #000;box-shadow:inset -1px -1px #404040,inset 1px 1px #fff,inset -2px -2px #808080,inset 2px 2px #d4d0c8"></div>
<div class="t" style="left:224.2px;top:377px;line-height:14px;height:14px;font-size:12px;color:#000;transform:scaleX(0.9224);transform-origin:0 0;">Apply</div>
<div class="a btn" style="left:597px;top:373px;width:75px;height:23px;"></div>
<div class="t" style="left:618.4px;top:377px;line-height:14px;height:14px;font-size:12px;color:#000;transform:scaleX(0.8913);transform-origin:0 0;">Cancel</div>
</body></html>
